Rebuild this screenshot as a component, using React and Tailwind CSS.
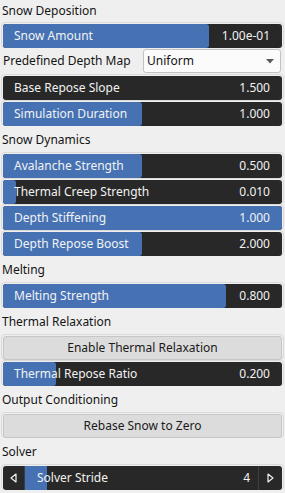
import React from 'react';

const FONT = { fontFamily: '"Noto Sans", "Open Sans", sans-serif' };

// Slider inner track is 279px wide (x 3..282)
function Frame({ children }) {
  return (
    <div className="h-[26px] rounded-[4px] border border-[#dadada] p-px">{children}</div>
  );
}

function Slider({ label, value, fill }) {
  return (
    <Frame>
      <div className="relative h-6 overflow-hidden rounded-[3px] bg-[#282828]">
        {fill > 0 && (
          <div
            className="absolute left-0 top-0 bottom-0 rounded-[3px] bg-[#4672b4]"
            style={{ width: fill }}
          />
        )}
        <div className="relative flex h-full items-center justify-between pl-[11px] pr-[12px] text-[12px] text-[#f2f2f2]">
          <span>{label}</span>
          <span>{value}</span>
        </div>
      </div>
    </Frame>
  );
}

function Button({ label }) {
  return (
    <Frame>
      <div className="flex h-6 items-center justify-center rounded-[3px] border border-[#c6c6c6] bg-[#dcdcdc] text-[12px] text-[#1a1a1a]">
        {label}
      </div>
    </Frame>
  );
}

function Header({ children, first }) {
  return first ? (
    <div className="flex h-[22px] items-center pb-px pl-px text-[12px] text-[#141414]">{children}</div>
  ) : (
    <div className="flex h-[26px] items-center pt-px pl-px text-[12px] text-[#141414]">{children}</div>
  );
}

function Combo() {
  return (
    <div className="flex h-[26px] items-center">
      <div className="w-[142px] pl-[2px] text-[12px] text-[#141414]">Predefined Depth Map</div>
      <div className="flex h-6 flex-1 items-center justify-between rounded-[3px] border border-[#c2c2c2] bg-[#fbfbfb] pl-[3px] pr-[6px] text-[12px] text-[#141414]">
        <span>Uniform</span>
        <svg width="8" height="5" viewBox="0 0 8 5">
          <path d="M0 0h8L4 4.5z" fill="#5a5a5a" />
        </svg>
      </div>
      <div className="w-[3px]" />
    </div>
  );
}

function Stepper({ label, value }) {
  return (
    <Frame>
      <div className="flex h-6 overflow-hidden rounded-[3px] bg-[#282828] text-[12px] text-[#f2f2f2]">
        <div className="flex w-[22px] items-center justify-center border-r border-[#3e3e3e]">
          <svg width="7" height="10" viewBox="0 0 7 10">
            <path d="M6 1L1 5l5 4z" fill="none" stroke="#f0f0f0" strokeWidth="1.2" strokeLinejoin="round" />
          </svg>
        </div>
        <div className="relative flex flex-1 items-center justify-between pl-[12px] pr-[8px]">
          <div className="absolute left-0 top-0 bottom-0 w-[22px] bg-[#4672b4]" />
          <span className="relative">{label}</span>
          <span className="relative">{value}</span>
        </div>
        <div className="flex w-[24px] items-center justify-center border-l border-[#3e3e3e]">
          <svg width="7" height="10" viewBox="0 0 7 10">
            <path d="M1 1l5 4-5 4z" fill="none" stroke="#f0f0f0" strokeWidth="1.2" strokeLinejoin="round" />
          </svg>
        </div>
      </div>
    </Frame>
  );
}

export default function App() {
  return (
    <div className="h-[493px] w-[285px] overflow-hidden bg-[#efefef] px-px" style={FONT}>
      <Header first>Snow Deposition</Header>
      <Slider label="Snow Amount" value="1.00e-01" fill={206} />
      <Combo />
      <Slider label="Base Repose Slope" value="1.500" fill={0} />
      <Slider label="Simulation Duration" value="1.000" fill={139} />

      <Header>Snow Dynamics</Header>
      <Slider label="Avalanche Strength" value="0.500" fill={139} />
      <Slider label="Thermal Creep Strength" value="0.010" fill={13} />
      <Slider label="Depth Stiffening" value="1.000" fill={279} />
      <Slider label="Depth Repose Boost" value="2.000" fill={139} />

      <Header>Melting</Header>
      <Slider label="Melting Strength" value="0.800" fill={223} />

      <Header>Thermal Relaxation</Header>
      <Button label="Enable Thermal Relaxation" />
      <Slider label="Thermal Repose Ratio" value="0.200" fill={53} />

      <Header>Output Conditioning</Header>
      <Button label="Rebase Snow to Zero" />

      <Header>Solver</Header>
      <Stepper label="Solver Stride" value="4" />
    </div>
  );
}
